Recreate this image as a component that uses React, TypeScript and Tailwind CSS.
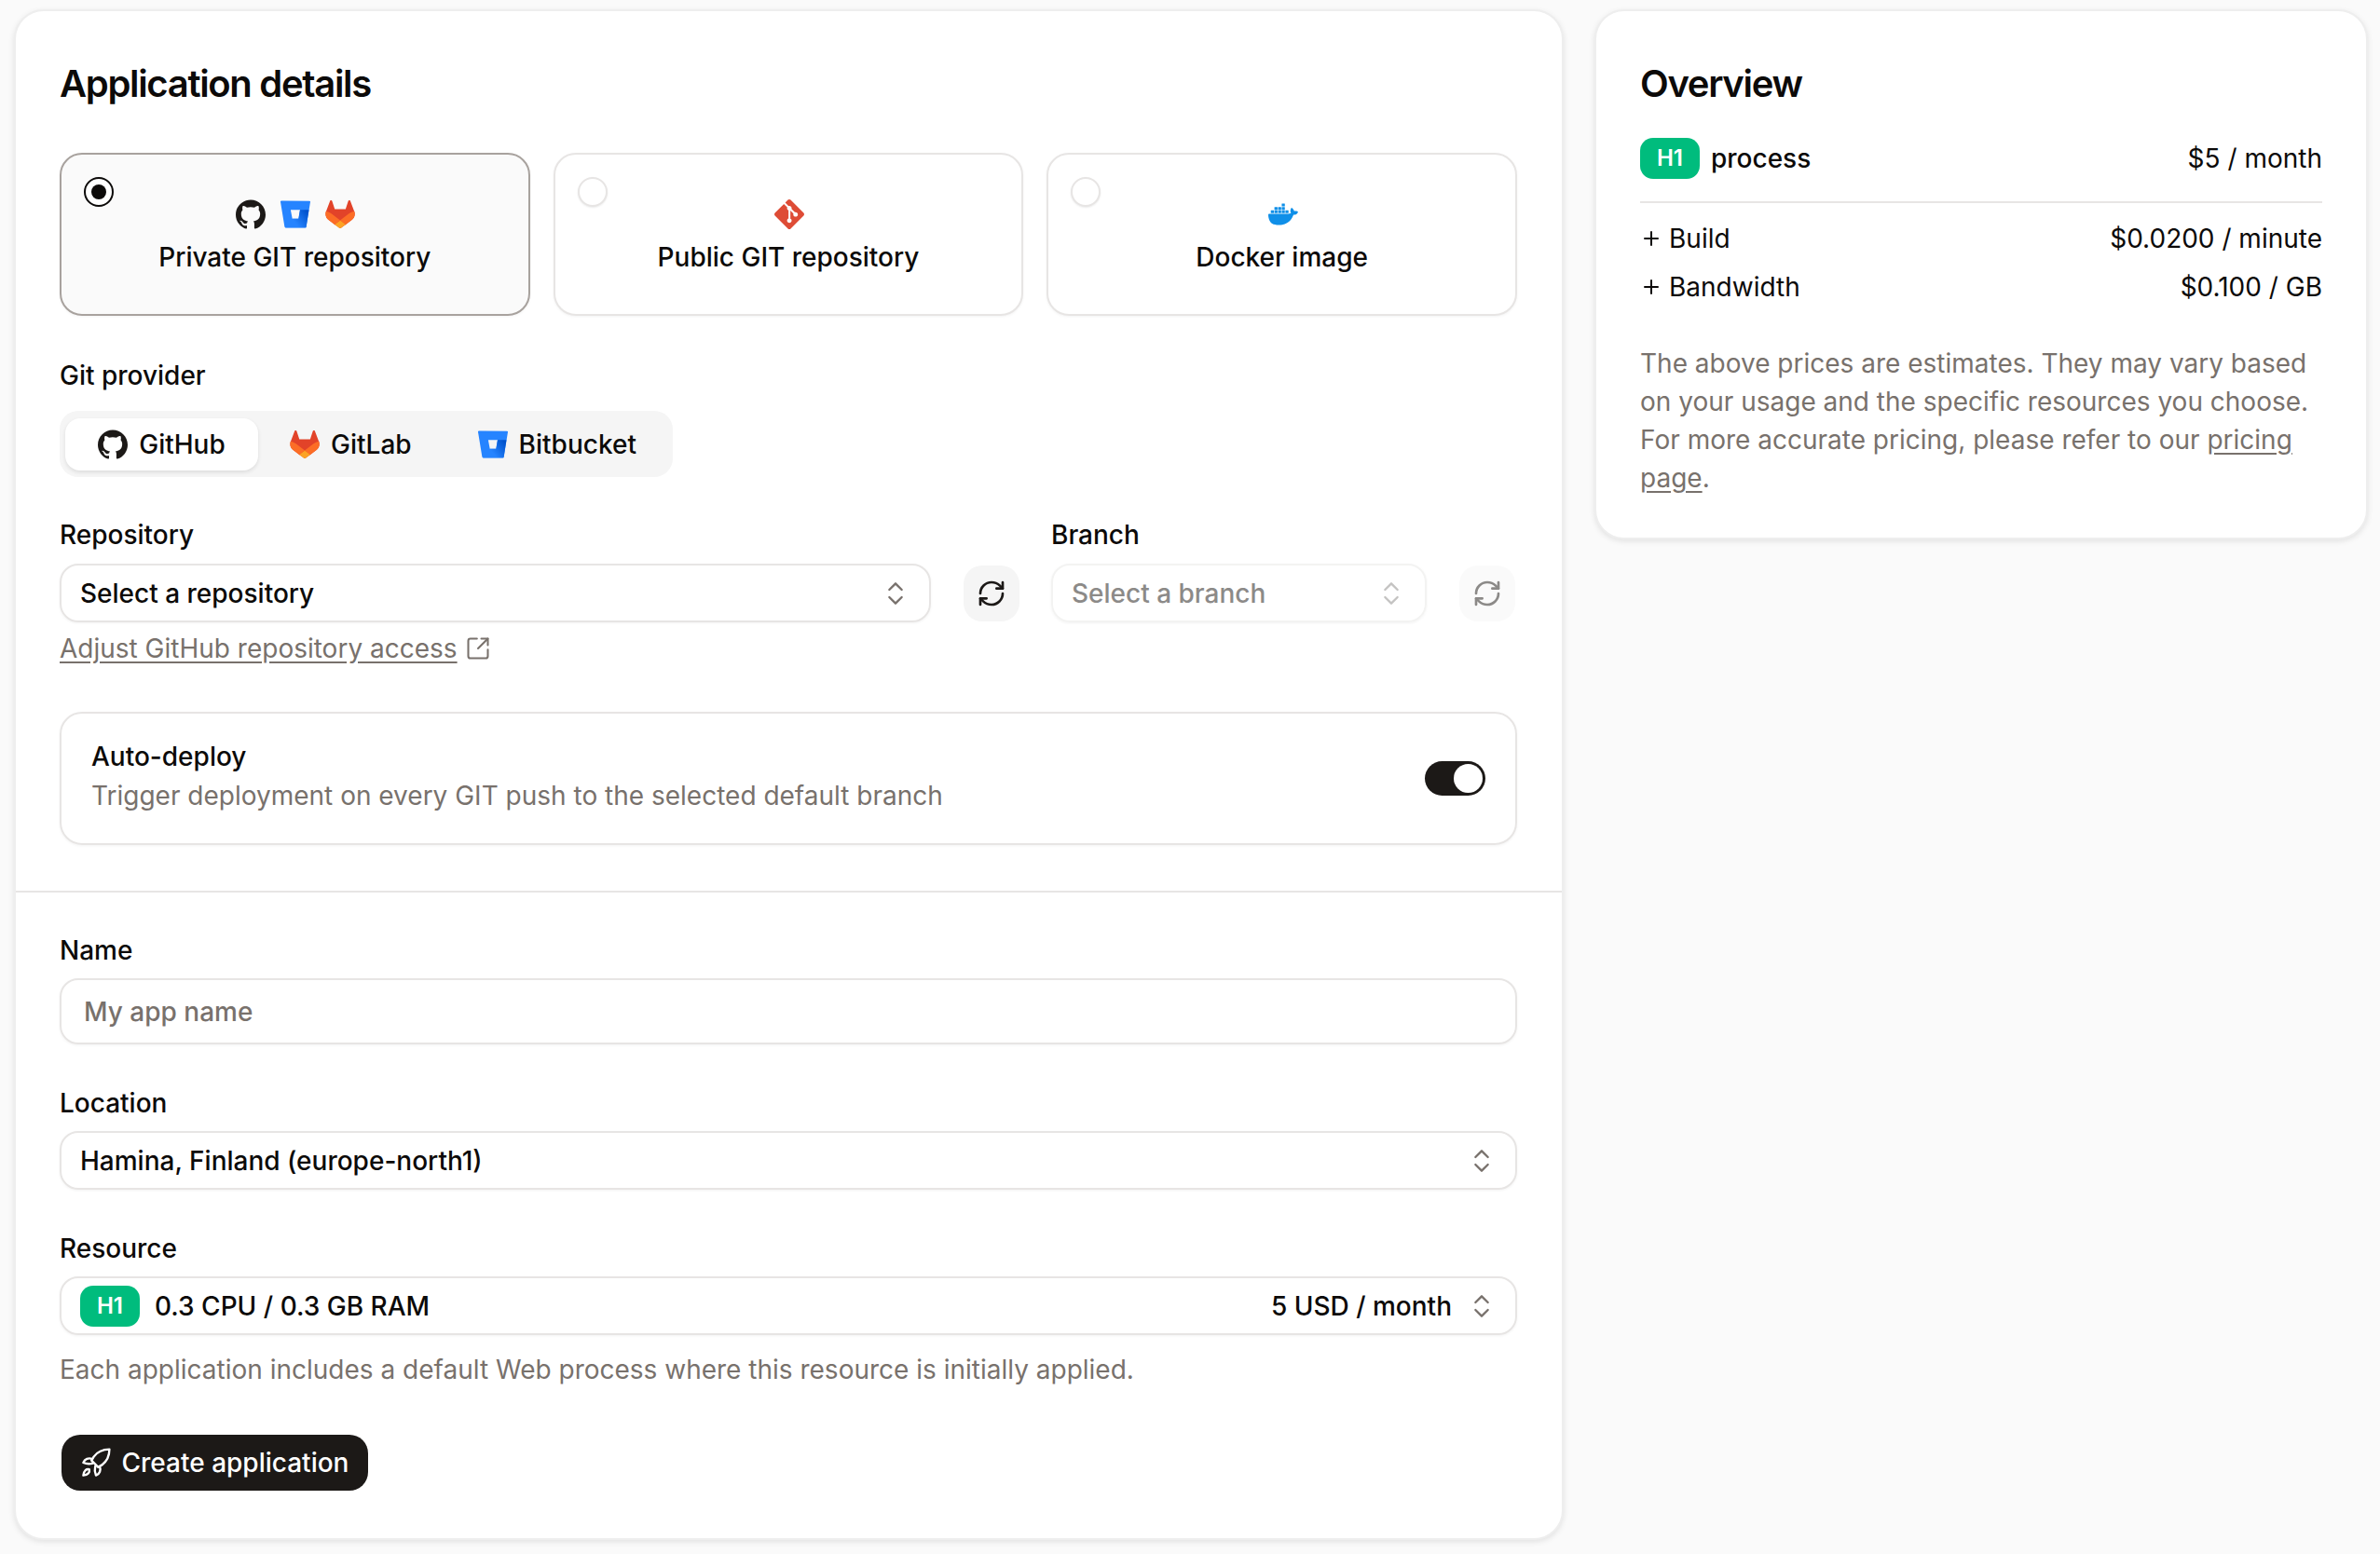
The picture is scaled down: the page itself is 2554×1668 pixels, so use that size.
import type { ReactNode } from 'react';
import { ChevronsUpDown, Plus, RefreshCw, SquareArrowOutUpRight } from 'lucide-react';
import { SiDocker, SiGit, SiGithub } from 'react-icons/si';

function GitLabIcon({ className }: { className?: string }) {
  return (
    <svg viewBox="92 92 196 196" className={className}>
      <path fill="#e24329" d="m282.83,170.73l-.27-.69-26.14-68.22c-.53-1.34-1.47-2.48-2.69-3.25-2.48-1.54-5.66-1.36-7.95.45-1.11.9-1.91,2.13-2.29,3.51l-17.65,54H154.76l-17.65-54c-.37-1.39-1.18-2.63-2.29-3.53-2.29-1.81-5.48-1.99-7.95-.45-1.21.77-2.15,1.91-2.69,3.25l-26.14,68.22-.27.69c-7.73,20.2-1.17,43.08,16.1,55.97l.09.07.24.17,39.82,29.82,19.7,14.91,12,9.06c2.88,2.19,6.87,2.19,9.75,0l12-9.06,19.7-14.91,40.06-30,.1-.08c17.24-12.89,23.79-35.73,16.07-55.92Z" />
      <path fill="#fc6d26" d="m282.83,170.73l-.27-.69c-12.74,2.62-24.74,8.02-35.13,15.82l-57.42,43.42c19.56,14.8,36.59,27.66,36.59,27.66l40.06-30,.1-.08c17.24-12.89,23.79-35.73,16.07-55.92Z" />
      <path fill="#fca326" d="m153.43,256.94l19.7,14.91,12,9.06c2.88,2.19,6.87,2.19,9.75,0l12-9.06,19.7-14.91s-17.03-12.91-36.59-27.66c-19.56,14.75-36.56,27.66-36.56,27.66Z" />
      <path fill="#fc6d26" d="m132.58,185.84c-10.38-7.82-22.39-13.22-35.13-15.82l-.27.69c-7.73,20.2-1.17,43.08,16.1,55.97l.09.07.24.17,39.82,29.82s17-12.91,36.59-27.66l-57.44-43.24Z" />
    </svg>
  );
}

function BitbucketIcon({ className, id }: { className?: string; id: string }) {
  return (
    <svg viewBox="0 0 24 24" className={className}>
      <defs>
        <linearGradient id={id} x1="24" y1="9.5" x2="12" y2="19" gradientUnits="userSpaceOnUse">
          <stop offset="0.15" stopColor="#0052cc" />
          <stop offset="1" stopColor="#2684ff" />
        </linearGradient>
      </defs>
      <path fill="#2684ff" d="M.778 1.213a.768.768 0 00-.768.892l3.263 19.81c.084.5.515.868 1.022.873H19.95a.772.772 0 00.77-.646l3.27-20.03a.768.768 0 00-.768-.891zM14.52 15.53H9.522L8.17 8.466h7.561z" />
      <path fill={`url(#${id})`} d="M22.84 8.47h-7.11l-1.21 7.06H9.52l-5.9 7c.19.16.43.25.67.25H19.95a.772.772 0 00.77-.646z" />
    </svg>
  );
}

function RocketIcon({ className }: { className?: string }) {
  return (
    <svg viewBox="2 2 20 20" fill="none" stroke="currentColor" strokeWidth={1.5} strokeLinejoin="round" strokeLinecap="round" className={className}>
      <path d="M21 3c-4.5 0-8 1.5-10.5 5L9 10.5l4.5 4.5 2.5-1.5C19.5 11 21 7.5 21 3Z" />
      <path d="M9.5 9.5C7 8.5 4.5 9.5 3.5 12c2 .8 4 1 6 .5" />
      <path d="M14.5 14.5c1 2.5 0 5-2.5 6-.8-2-1-4-.5-6" />
      <path d="M7.5 16.5c-2-.5-3.5.8-4 4 3.2-.5 4.5-2 4-4Z" />
    </svg>
  );
}

function Label({ children }: { children: ReactNode }) {
  return <div className="h-10 text-[28px] leading-10 font-medium text-[#0c0a09]">{children}</div>;
}

function Select({ children, disabled, className }: { children: ReactNode; disabled?: boolean; className?: string }) {
  return (
    <div
      className={`flex h-[63px] items-center justify-between rounded-[20px] border-2 pr-[20px] pl-[20px] text-[28px] font-medium shadow-[0_1px_3px_rgba(0,0,0,0.05)] ${
        disabled ? 'border-[#f3f3f2] text-[#8c8a88]' : 'border-[#e7e5e4] text-[#0c0a09]'
      } ${className ?? ''}`}
    >
      {children}
      <ChevronsUpDown className={`h-8 w-8 shrink-0 ${disabled ? 'text-[#c4c3c2]' : 'text-[#78716c]'}`} strokeWidth={1.75} />
    </div>
  );
}

function RefreshButton({ disabled }: { disabled?: boolean }) {
  return (
    <div className={`flex h-[60px] w-[60px] shrink-0 items-center justify-center rounded-[20px] ${disabled ? 'bg-[#fafafa] text-[#8c8a88]' : 'bg-[#f5f5f5] text-[#1c1917]'}`}>
      <RefreshCw className="h-8 w-8" strokeWidth={2} />
    </div>
  );
}

function H1Badge({ className }: { className?: string }) {
  return (
    <span className={`flex items-center justify-center rounded-[14px] bg-emerald-500 text-[24px] font-semibold text-white ${className ?? ''}`}>
      H1
    </span>
  );
}

function SourceCard({ active, title, icons }: { active?: boolean; title: string; icons: ReactNode }) {
  return (
    <div
      className={`relative flex h-[175px] flex-col items-center rounded-[24px] border-2 pt-[48px] shadow-[0_1px_3px_rgba(0,0,0,0.05)] ${
        active ? 'border-[#a8a29e] bg-[#fafafa]' : 'border-[#e7e5e4] bg-white'
      }`}
    >
      <span
        className={`absolute top-[24px] left-[24px] flex h-[32px] w-[32px] items-center justify-center rounded-full border-2 bg-white ${
          active ? 'border-[#0c0a09]' : 'border-[#e7e5e4] shadow-[0_1px_2px_rgba(0,0,0,0.08)]'
        }`}
      >
        {active && <span className="h-[16px] w-[16px] rounded-full bg-[#0c0a09]" />}
      </span>
      <div className="ml-[2px] flex h-8 items-center gap-4">{icons}</div>
      <div className="mt-[10px] text-[28px] leading-10 font-medium text-[#0c0a09]">{title}</div>
    </div>
  );
}

const prices = [
  { name: 'Build', price: '$0.0200 / minute' },
  { name: 'Bandwidth', price: '$0.100 / GB' },
];

export default function App() {
  return (
    <div className="flex min-h-[1668px] items-start gap-[33px] bg-[#fafafa] pt-[10px] pl-[15px] font-['Inter',sans-serif] text-[#0c0a09]">
      <div className="w-[1663px] rounded-[32px] border-2 border-[#eeeeee] bg-white shadow-[0_2px_6px_rgba(0,0,0,0.1)]">
        <div className="pt-[48px] pr-[48px] pb-[49px] pl-[47px]">
          <h2 className="h-[60px] text-[40px] leading-[60px] font-semibold tracking-[-0.033em]">Application details</h2>

          <div className="mt-[44px] grid grid-cols-3 gap-[25px]">
            <SourceCard
              active
              title="Private GIT repository"
              icons={
                <>
                  <SiGithub className="h-8 w-8 text-[#1c1917]" />
                  <BitbucketIcon className="h-8 w-8" id="bb-card" />
                  <GitLabIcon className="h-8 w-8" />
                </>
              }
            />
            <SourceCard title="Public GIT repository" icons={<SiGit className="h-8 w-8 text-[#de4c36]" />} />
            <SourceCard title="Docker image" icons={<SiDocker className="h-8 w-8 text-[#0f8fe8]" />} />
          </div>

          <div className="mt-[44px]">
            <Label>Git provider</Label>
          </div>
          <div className="mt-[18px] inline-flex h-[71px] items-center gap-[16px] rounded-[20px] bg-[#f5f5f5] pr-[39px] pl-[6px] text-[28px] font-medium">
            <div className="flex h-[56px] w-[207px] items-center justify-center gap-[12px] rounded-[16px] bg-white shadow-[0_2px_4px_rgba(0,0,0,0.1)]">
              <SiGithub className="h-8 w-8 text-[#1c1917]" />
              GitHub
            </div>
            <div className="flex h-[56px] items-center gap-[12px] pr-[43px] pl-[18px]">
              <GitLabIcon className="h-8 w-8" />
              GitLab
            </div>
            <div className="flex h-[56px] items-center gap-[12px] pl-[12px]">
              <BitbucketIcon className="h-8 w-8" id="bb-tab" />
              Bitbucket
            </div>
          </div>

          <div className="mt-[42px] flex items-start">
            <div className="w-[935px]">
              <Label>Repository</Label>
              <Select className="mt-[11px]">Select a repository</Select>
              <div className="mt-[8px] flex h-10 items-center gap-[8px] text-[28px] font-normal text-[#78716c]">
                <span className="underline underline-offset-4">Adjust GitHub repository access</span>
                <SquareArrowOutUpRight className="h-7 w-7" strokeWidth={1.75} />
              </div>
            </div>
            <div className="mt-[53px] ml-[35px]">
              <RefreshButton />
            </div>
            <div className="ml-[34px] w-[403px]">
              <Label>Branch</Label>
              <Select className="mt-[11px]" disabled>
                Select a branch
              </Select>
            </div>
            <div className="mt-[53px] ml-[35px]">
              <RefreshButton disabled />
            </div>
          </div>

          <div className="mt-[48px] flex h-[143px] items-center justify-between rounded-[24px] border-2 border-[#e7e5e4] pr-[32px] pl-[32px] shadow-[0_1px_3px_rgba(0,0,0,0.05)]">
            <div className="pb-[6px] text-[28px] leading-[42px]">
              <div className="font-medium">Auto-deploy</div>
              <div className="font-normal text-[#78716c]">Trigger deployment on every GIT push to the selected default branch</div>
            </div>
            <div className="flex h-[37px] w-[65px] items-center justify-end rounded-full bg-[#1c1917] p-[3px]">
              <span className="h-[31px] w-[31px] rounded-full bg-white" />
            </div>
          </div>
        </div>

        <div className="border-t-2 border-[#e7e5e4] pt-[42px] pr-[48px] pb-[51px] pl-[47px]">
          <Label>Name</Label>
          <div className="mt-[10px] flex h-[71px] items-center rounded-[20px] border-2 border-[#e7e5e4] pl-[24px] text-[28px] font-medium text-[#78716c] shadow-[0_1px_3px_rgba(0,0,0,0.05)]">
            My app name
          </div>

          <div className="mt-[43px]">
            <Label>Location</Label>
          </div>
          <Select className="mt-[10px]">Hamina, Finland (europe-north1)</Select>

          <div className="mt-[43px]">
            <Label>Resource</Label>
          </div>
          <div className="mt-[10px] flex h-[63px] items-center rounded-[20px] border-2 border-[#e7e5e4] pr-[20px] pl-[20px] text-[28px] font-medium shadow-[0_1px_3px_rgba(0,0,0,0.05)]">
            <H1Badge className="h-[44px] w-[64px]" />
            <span className="ml-[16px]">0.3 CPU / 0.3 GB RAM</span>
            <span className="mr-[16px] ml-auto">5 USD / month</span>
            <ChevronsUpDown className="h-8 w-8 text-[#78716c]" strokeWidth={1.75} />
          </div>
          <div className="mt-[17px] h-10 text-[28px] leading-10 font-normal text-[#78716c]">
            Each application includes a default Web process where this resource is initially applied.
          </div>

          <div className="mt-[50px] ml-[2px] flex h-[60px] w-[329px] items-center justify-center gap-[12px] rounded-[20px] bg-[#1c1917] text-[28px] font-medium text-white">
            <RocketIcon className="h-8 w-8" />
            Create application
          </div>
        </div>
      </div>

      <div className="h-[569px] w-[830px] rounded-[32px] border-2 border-[#eeeeee] bg-white pt-[48px] pr-[47px] pl-[47px] shadow-[0_2px_6px_rgba(0,0,0,0.1)]">
        <h2 className="h-[60px] text-[40px] leading-[60px] font-semibold tracking-[-0.033em]">Overview</h2>
        <div className="mt-[28px] flex items-center justify-between text-[28px]">
          <div className="flex items-center gap-[12px] font-medium">
            <H1Badge className="h-[44px] w-[64px]" />
            process
          </div>
          <span className="font-normal">$5 / month</span>
        </div>
        <div className="mt-[24px] border-t-2 border-[#e7e5e4] pt-[12px] text-[28px] leading-[52px] font-normal">
          {prices.map((p) => (
            <div key={p.name} className="flex items-center justify-between">
              <div className="flex items-center gap-[7px]">
                <Plus className="h-6 w-6" strokeWidth={2} />
                {p.name}
              </div>
              <span>{p.price}</span>
            </div>
          ))}
        </div>
        <p className="mt-[36px] text-[28px] leading-[41px] font-normal text-[#78716c]">
          The above prices are estimates. They may vary based on your usage and the specific resources you choose. For more accurate pricing, please refer to our{' '}
          <span className="underline underline-offset-4">pricing page</span>.
        </p>
      </div>
    </div>
  );
}
